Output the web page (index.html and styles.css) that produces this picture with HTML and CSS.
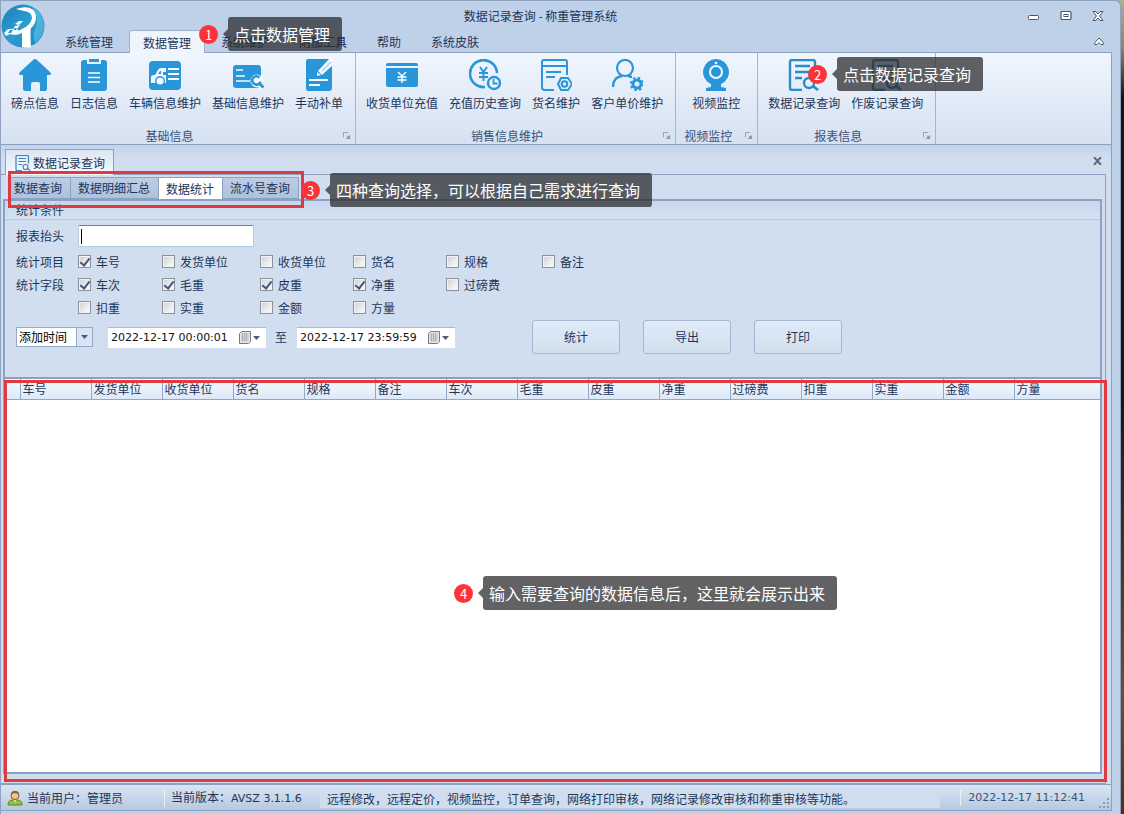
FILE: index.html
```html
<!DOCTYPE html>
<html lang="zh-CN">
<head>
<meta charset="utf-8">
<title>数据记录查询 - 称重管理系统</title>
<link rel="stylesheet" href="styles.css">
</head>
<body>
<svg class="defs" aria-hidden="true">
  <defs>
    <linearGradient id="globe" x1="0" y1="0" x2="1" y2="1"><stop offset="0" stop-color="#1d7fb8"/><stop offset=".5" stop-color="#2b9bd0"/><stop offset="1" stop-color="#1a86c0"/></linearGradient>
    <symbol id="launcher" viewBox="0 0 9 9"><path d="M.5 6V.5H6M4 4l2 2" fill="none" stroke="#8a97aa"/><path d="M8 3v5H3z" fill="#8a97aa"/></symbol>
    <symbol id="calendar" viewBox="0 0 12 13"><path d="M2.500.5h9v10l-2 2h-9v-10z" fill="#e6e8ea" stroke="#77797c"/><path d="M2 3h8M2 5h8M2 7h8M2 9h8M3.500 2v9M5.500 2v9M7.500 2v9" stroke="#a3a8ae" stroke-width=".7"/></symbol>
    <symbol id="down" viewBox="0 0 7 4"><path d="M0 0h7L3.500 4z" fill="#4b5d78"/></symbol>
    <symbol id="record" viewBox="0 0 32 32"><path d="M27 17V3a2 2 0 0 0-2-2H4a2 2 0 0 0-2 2v26a2 2 0 0 0 2 2h10M7 7h15M7 13h15M7 19h7" fill="none" stroke="currentColor" stroke-width="2.400"/><circle cx="21" cy="24" r="5" fill="none" stroke="currentColor" stroke-width="2.400"/><path d="M25 27l5 4" stroke="currentColor" stroke-width="2.800"/></symbol>
  </defs>
</svg>
<div class="window">
  <header class="header">
    <svg class="logo" viewBox="0 0 44 44"><circle cx="22" cy="22" r="21.500" fill="url(#globe)"/><path d="M31 3a21 21 0 0 1 3 36q-3-8 1-17 3-10-4-19z" fill="#6cc8ea" opacity=".55"/><path d="M15 5q8-3 14-1 7 3 6 11-1 6-5 9-1 2 0 19-4 1-9 0V29q-4 2-8 2 2-3 8-6 9-4 10-11 0-6-8-7-5-1-8-2z" fill="#fff"/><path d="M3 29l4-4h5l2-3 5-1-3 4 2 2-5 4-4-1-4 2zM14 20l4-3h4l-4 4z" fill="#fff"/><path d="M9 26h3l-2 3H7zM14 24h2l-1 2h-3z" fill="#2b95ca"/></svg>
    <div class="titlebar">
      <h1 class="title">数据记录查询 - 称重管理系统</h1>
      <div class="controls">
        <button class="control" aria-label="最小化"><svg width="12" height="12"><rect x=".5" y="5.500" width="10" height="4" rx="1" fill="#fff" stroke="#4a5468"/></svg></button>
        <button class="control" aria-label="最大化"><svg width="12" height="12"><rect x="1" y="1.500" width="10" height="8" rx="1" fill="#fff" stroke="#4a5468" stroke-width="1.200"/><rect x="4" y="4.500" width="4" height="2" fill="#fff" stroke="#4a5468"/></svg></button>
        <button class="control" aria-label="关闭"><svg width="12" height="12"><path d="M1 1.500h3l2 2.500 2-2.500h3L7.500 6l3.500 4.500H8L6 8l-2 2.500H1L4.500 6z" fill="#fff" stroke="#4a5468"/></svg></button>
      </div>
    </div>
    <nav class="menu">
      <button class="menu-tab">系统管理</button>
      <button class="menu-tab menu-tab-active">数据管理</button>
      <button class="menu-tab">系统维护</button>
      <button class="menu-tab">附加工具</button>
      <button class="menu-tab">帮助</button>
      <button class="menu-tab">系统皮肤</button>
      <button class="control collapse" aria-label="收起功能区"><svg width="10" height="9"><path d="M.8 5.500L5 1l4.200 4.500v2H7L5 5.500 3 7.500H.8z" fill="#fff" stroke="#4a5468"/></svg></button>
    </nav>
  </header>

  <section class="ribbon">
    <div class="group">
      <div class="tools">
        <button class="tool"><svg class="tool-icon" viewBox="0 0 32 32"><path d="M16 0q1 0 2 1l13 12q2 2 0 3h-3v14q0 2-2 2h-5v-7q0-2-2-2h-5q-2 0-2 2v7H6q-2 0-2-2V16H1q-2-1 0-3L14 1q1-1 2-1z" fill="#2896d8"/></svg>磅点信息</button>
        <button class="tool"><svg class="tool-icon" viewBox="0 0 32 32"><path d="M6 1h3v4h14V1h3q3 0 3 3v25q0 3-3 3H6q-3 0-3-3V4q0-3 3-3zM11 0h10v3H11z" fill="#2896d8"/><path d="M10 14h12M10 18.500h12M10 23h12" stroke="#fff" stroke-width="1.600"/></svg>日志信息</button>
        <button class="tool"><svg class="tool-icon" viewBox="0 0 32 32"><rect y="2" width="32" height="29" rx="4" fill="#2896d8"/><path d="M2 24v-6q0-2 3-2h1l3-5q1-2 3-2h5v4h-3v3h3v8z" fill="#f4faff"/><path d="M9 15l2-3h1v3z" fill="#2896d8"/><circle cx="11" cy="22" r="5" fill="#2896d8"/><circle cx="11" cy="22" r="3.600" fill="#f4faff"/><path d="M19 10h11M19 15h11M19 20h11" stroke="#f4faff" stroke-width="2"/></svg>车辆信息维护</button>
        <button class="tool"><svg class="tool-icon" viewBox="0 0 32 32"><rect x="1" y="6" width="28" height="23" rx="3" fill="#2896d8"/><path d="M4 11h7M4 17h9M4 22h14" stroke="#f4faff" stroke-width="1.600"/><circle cx="25" cy="22" r="6.500" fill="#f4faff"/><path d="M26 24l5 5" stroke="#f4faff" stroke-width="6"/><path d="M27.500 18.500a4.200 4.200 0 1 0 1 4" fill="none" stroke="#2896d8" stroke-width="2.600"/><path d="M27 24l4.500 4.500" stroke="#2896d8" stroke-width="3"/></svg>基础信息维护</button>
        <button class="tool"><svg class="tool-icon" viewBox="0 0 32 32"><path d="M5 0h21q3 0 3 3v26q0 3-3 3H5q-2 0-2-3V3q0-3 2-3z" fill="#2896d8"/><path d="M26 0h5v5L19 16l-4-4z" fill="#f4faff"/><path d="M14 13l4 3-4 1z" fill="#f4faff"/><path d="M28 3l-9 9" stroke="#b9def4" stroke-width="2"/><path d="M6 21h19M6 26h11" stroke="#f4faff" stroke-width="1.800"/></svg>手动补单</button>
      </div>
      <div class="group-foot"><span class="group-name">基础信息</span><svg class="launcher"><use href="#launcher"/></svg></div>
    </div>
    <div class="group">
      <div class="tools">
        <button class="tool"><svg class="tool-icon" viewBox="0 0 32 32"><path d="M2 4h28q2 0 2 2v1H0V6q0-2 2-2zM0 9h32v17q0 2-2 2H2q-2 0-2-2z" fill="#2896d8"/><path d="M12 13l4 4 4-4M11.500 18h9M11.500 21h9M16 17v7" fill="none" stroke="#fff" stroke-width="1.400"/></svg>收货单位充值</button>
        <button class="tool"><svg class="tool-icon" viewBox="0 0 32 32"><path d="M28 14A13.500 13.500 0 1 0 16 28" fill="none" stroke="#2896d8" stroke-width="2.600"/><path d="M11 8l3.500 5L18 8M10 14h9M10 18h9M14.500 13v9" fill="none" stroke="#2896d8" stroke-width="2"/><circle cx="25" cy="24" r="6" fill="#edf4fc" stroke="#2896d8" stroke-width="2.400"/><path d="M24.500 20v4.500h4" fill="none" stroke="#2896d8" stroke-width="1.800"/></svg>充值历史查询</button>
        <button class="tool"><svg class="tool-icon" viewBox="0 0 32 32"><path d="M27 16V3q0-2-2-2H4Q2 1 2 3v25q0 3 3 3h9M2 7h25M6 13h15M6 18h9" fill="none" stroke="#2896d8" stroke-width="2"/><path d="M21 19h7l4 6-4 6h-7l-3-6z" fill="none" stroke="#2896d8" stroke-width="2"/><circle cx="24.500" cy="25" r="2.800" fill="none" stroke="#2896d8" stroke-width="2"/></svg>货名维护</button>
        <button class="tool"><svg class="tool-icon" viewBox="0 0 32 32"><circle cx="14" cy="9" r="8" fill="none" stroke="#2896d8" stroke-width="2.200"/><path d="M2 28q0-10 9-11M17 17l4 1" fill="none" stroke="#2896d8" stroke-width="2.400"/><circle cx="26" cy="25" r="4" fill="none" stroke="#2896d8" stroke-width="3"/><circle cx="26" cy="25" r="6" fill="none" stroke="#2896d8" stroke-width="2.400" stroke-dasharray="2.360 2.360"/></svg>客户单价维护</button>
      </div>
      <div class="group-foot"><span class="group-name">销售信息维护</span><svg class="launcher"><use href="#launcher"/></svg></div>
    </div>
    <div class="group">
      <div class="tools tools-single">
        <button class="tool"><svg class="tool-icon" viewBox="0 0 32 32"><path d="M16 0a13 13 0 0 1 5 25v3l5 1v3H6v-3l5-1v-3A13 13 0 0 1 16 0z" fill="#2896d8"/><circle cx="16" cy="13" r="6" fill="none" stroke="#f4faff" stroke-width="2"/><circle cx="16" cy="4" r="1.300" fill="#f4faff"/></svg>视频监控</button>
      </div>
      <div class="group-foot"><span class="group-name">视频监控</span><svg class="launcher"><use href="#launcher"/></svg></div>
    </div>
    <div class="group">
      <div class="tools">
        <button class="tool"><svg class="tool-icon"><use href="#record"/></svg>数据记录查询</button>
        <button class="tool"><svg class="tool-icon"><use href="#record"/></svg>作废记录查询</button>
      </div>
      <div class="group-foot"><span class="group-name">报表信息</span><svg class="launcher"><use href="#launcher"/></svg></div>
    </div>
  </section>

  <main class="workspace">
    <div class="doc-tabs">
      <button class="doc-tab"><svg class="doc-icon"><use href="#record"/></svg>数据记录查询</button>
      <button class="control doc-close" aria-label="关闭标签"><svg width="9" height="8"><path d="M1 0l7 8M8 0L1 8" stroke="#5d6a7e" stroke-width="2"/></svg></button>
    </div>
    <div class="document">
      <nav class="views">
        <button class="view">数据查询</button>
        <button class="view">数据明细汇总</button>
        <button class="view view-active">数据统计</button>
        <button class="view">流水号查询</button>
      </nav>
      <div class="page">
        <form class="filters">
          <h2 class="filters-title">统计条件</h2>
          <div class="fields">
            <label for="report-title">报表抬头</label>
            <input class="text-box" id="report-title" type="text">
            <span class="row-start">统计项目</span>
            <label class="check"><input type="checkbox" checked>车号</label>
            <label class="check"><input type="checkbox">发货单位</label>
            <label class="check"><input type="checkbox">收货单位</label>
            <label class="check"><input type="checkbox">货名</label>
            <label class="check"><input type="checkbox">规格</label>
            <label class="check"><input type="checkbox">备注</label>
            <span class="row-start">统计字段</span>
            <label class="check"><input type="checkbox" checked>车次</label>
            <label class="check"><input type="checkbox" checked>毛重</label>
            <label class="check"><input type="checkbox" checked>皮重</label>
            <label class="check"><input type="checkbox" checked>净重</label>
            <label class="check"><input type="checkbox">过磅费</label>
            <label class="check check-first"><input type="checkbox">扣重</label>
            <label class="check"><input type="checkbox">实重</label>
            <label class="check"><input type="checkbox">金额</label>
            <label class="check"><input type="checkbox">方量</label>
          </div>
          <div class="range">
            <span class="combo"><select class="combo-select" aria-label="时间类型"><option>添加时间</option></select><span class="combo-arrow"><svg width="7" height="4"><use href="#down"/></svg></span></span>
            <span class="date"><input class="date-input" type="text" value="2022-12-17 00:00:01" aria-label="开始时间"><button type="button" class="date-button" aria-label="选择开始时间"><svg width="12" height="13"><use href="#calendar"/></svg><svg width="7" height="4"><use href="#down"/></svg></button></span>
            <span class="to">至</span>
            <span class="date"><input class="date-input" type="text" value="2022-12-17 23:59:59" aria-label="结束时间"><button type="button" class="date-button" aria-label="选择结束时间"><svg width="12" height="13"><use href="#calendar"/></svg><svg width="7" height="4"><use href="#down"/></svg></button></span>
            <span class="actions">
              <button type="button" class="action">统计</button>
              <button type="button" class="action">导出</button>
              <button type="button" class="action">打印</button>
            </span>
          </div>
        </form>
        <div class="results">
          <table class="grid">
            <thead><tr><th class="marker"></th><th>车号</th><th>发货单位</th><th>收货单位</th><th>货名</th><th>规格</th><th>备注</th><th>车次</th><th>毛重</th><th>皮重</th><th>净重</th><th>过磅费</th><th>扣重</th><th>实重</th><th>金额</th><th class="rest">方量</th></tr></thead>
          </table>
        </div>
      </div>
    </div>
    <div class="outline outline-results"></div>
    <div class="outline outline-views"></div>
  </main>

  <footer class="status">
    <svg class="user" viewBox="0 0 16 16"><path d="M1 15q0-5 5-5h4q5 0 5 5z" fill="#8fc43a" stroke="#5f8428"/><path d="M6 9h4l-2 4z" fill="#f4d9a8"/><circle cx="8" cy="5.500" r="4" fill="#f1c686" stroke="#84592d"/><path d="M4 5q0-4 4-4t4 4q-2-2-4-2T4 5z" fill="#8b5a2b"/></svg>
    <span class="status-user">当前用户：管理员</span>
    <span class="status-version">当前版本：<span class="latin">AVSZ 3.1.1.6</span></span>
    <span class="status-news">远程修改，远程定价，视频监控，订单查询，网络打印审核，网络记录修改审核和称重审核等功能。</span>
    <time class="status-time latin">2022-12-17 11:12:41</time>
    <svg class="grip" width="10" height="10"><path d="M8 0h2v2H8zM4 4h2v2H4zM8 4h2v2H8zM0 8h2v2H0zM4 8h2v2H4zM8 8h2v2H8z" fill="#8b9db8"/></svg>
  </footer>

  <div class="callout callout-menu"><span class="badge">1</span><span class="tip">点击数据管理</span></div>
  <div class="callout callout-record"><span class="badge">2</span><span class="tip">点击数据记录查询</span></div>
  <div class="callout callout-views"><span class="badge">3</span><span class="tip">四种查询选择，可以根据自己需求进行查询</span></div>
  <div class="callout callout-results"><span class="badge">4</span><span class="tip">输入需要查询的数据信息后，这里就会展示出来</span></div>
</div>
</body>
</html>
```

FILE: styles.css
```css
* { box-sizing: border-box; }

body {
  margin: 0;
  padding-right: 3px;
  background: linear-gradient(#b4ab90, #8a8468 6%, #17130f 12%, #1d1712 50%, #6b4f30 85%, #4d3115);
  color: #1e3558;
  font: 12px/16px "Noto Sans CJK SC", sans-serif;
}

button, input, select {
  margin: 0;
  padding: 0;
  border: 0;
  background: none;
  color: inherit;
  font: inherit;
}

svg { display: block; flex: none; }

.defs { position: absolute; width: 0; height: 0; }

.window {
  position: relative;
  display: flex;
  flex-direction: column;
  min-height: 100vh;
  padding: 0 8px 3px 0;
  border: 1px solid #8fa3c0;
  border-width: 1px 1px 0;
  border-radius: 0 6px 0 0;
  background: #bfd1e9;
}

.latin { font-family: "DejaVu Sans", sans-serif; font-size: 11px; }

/* Title bar and menu */
.header { position: relative; }
.logo { position: absolute; left: 0; top: 3px; width: 44px; height: 44px; }

.titlebar {
  display: grid;
  grid-template-columns: 1fr auto 1fr;
  align-items: center;
  height: 29px;
  padding-right: 8px;
}
.title {
  grid-column: 2;
  margin: 0;
  padding-right: 24px;
  font-size: 12px;
  font-weight: 400;
}
.controls { display: flex; gap: 20px; justify-content: flex-end; }
.control { display: grid; place-items: center; }

.menu { display: flex; gap: 2px; height: 22px; padding: 0 8px 0 50px; }
.menu-tab { padding: 2px 14px 0; }
.menu-tab-active {
  margin-bottom: -1px;
  padding: 1px 13px 0;
  border: 1px solid #9db2d0;
  border-bottom: 0;
  border-radius: 3px 3px 0 0;
  background: #eff5fd;
  z-index: 1;
}
.collapse { margin-left: auto; }

/* Ribbon */
.ribbon {
  display: flex;
  height: 93px;
  border: 1px solid #8ba1c1;
  border-left: 0;
  background: linear-gradient(#f0f6fe, #e2ebf7 50%, #d6e2f1);
}
.group {
  display: flex;
  flex-direction: column;
  justify-content: space-between;
  border-right: 1px solid #a3b6d0;
}
.tools { display: flex; gap: 11px; padding: 6px 12px 0 10px; }
.tools-single { padding: 6px 17px 0 16px; }
.tool { display: flex; flex-direction: column; align-items: center; gap: 4px; }
.tool-icon { width: 32px; height: 32px; color: #2a8cc8; }
.group-foot { display: flex; align-items: center; padding: 0 4px 0 0; color: #38517a; }
.group-name { flex: 1; padding-right: 5px; text-align: center; }
.launcher { width: 8px; height: 8px; }

/* Workspace */
.workspace {
  position: relative;
  display: flex;
  flex: 1;
  flex-direction: column;
  border-right: 1px solid #8ba1c1;
  background: linear-gradient(#c3d2e8, #d0deef 12px);
}
.doc-tabs { display: flex; height: 29px; padding: 4px 9px 0 4px; }
.doc-tab {
  display: flex;
  align-items: center;
  gap: 2px;
  margin-bottom: -1px;
  padding: 0 8px 0 9px;
  border: 1px solid #8ba1c1;
  border-bottom: 0;
  background: linear-gradient(#dbe6f4, #f7faff);
  z-index: 1;
}
.doc-icon { width: 16px; height: 16px; color: #3c84b4; }
.doc-close { margin-left: auto; padding-bottom: 2px; }

.document {
  display: flex;
  flex: 1;
  flex-direction: column;
  margin-right: 5px;
  padding: 2px 3px 9px 2px;
  border: 1px solid #8ba1c1;
  border-left: 0;
  background: #d0deef;
}
.views { display: flex; height: 22px; padding-left: 6px; }
.view { padding: 0 8px 0 7px; border: 1px solid #8ba1c1; border-left: 0; background: linear-gradient(#bccde4, #adc2dd); }
.view:first-child { padding-left: 4px; border-left: 1px solid #8ba1c1; }
.view-active { background: #fff; border-bottom: 0; }

.page {
  display: flex;
  flex: 1;
  flex-direction: column;
  border: 2px solid #8ba1bf;
  background: #d0deef;
}

/* Filters */
.filters { padding-bottom: 23px; border-bottom: 2px solid #8ba1bf; }
.filters-title {
  height: 19px;
  margin: 0;
  padding: 1px 0 0 11px;
  border-bottom: 1px solid #b3c9e2;
  background: linear-gradient(#c5d7ec, #d5e3f3);
  font-size: 12px;
  font-weight: 400;
}
.fields {
  display: grid;
  grid-template-columns: 62px 84px 98px 93px 93px 96px auto;
  grid-template-rows: 28px;
  grid-auto-rows: 23px;
  align-items: center;
  padding: 2px 11px 0;
}
.text-box {
  grid-column: 2 / 4;
  width: 176px;
  height: 22px;
  padding: 0 5px;
  border: 1px solid #b4c8e0;
  border-top-color: #6784a5;
  border-radius: 2px;
  outline: 0;
  background: linear-gradient(#000, #000) 2px center / 1px 15px no-repeat #fff;
  color: #000;
}
.row-start { grid-column: 1; }
.check { display: flex; align-items: center; gap: 5px; }
.check-first { grid-column: 2; }
.check input {
  appearance: none;
  display: grid;
  place-items: center;
  width: 13px;
  height: 13px;
  border: 1px solid #8b929b;
  background: linear-gradient(135deg, #cdd0d4, #fff);
  box-shadow: inset 0 0 0 1px #f2f2f2;
}
.check input:checked::before {
  content: "";
  width: 4px;
  height: 8px;
  margin-bottom: 2px;
  border: solid #46557a;
  border-width: 0 2px 2px 0;
  transform: rotate(38deg);
}

.range { display: flex; align-items: center; padding: 1px 11px 0; }
.combo { position: relative; width: 77px; height: 20px; }
.combo-select {
  appearance: none;
  width: 100%;
  height: 100%;
  padding-left: 2px;
  border: 1px solid #96aac4;
  background: #fff;
  color: #000;
}
.combo-arrow {
  position: absolute;
  inset: 1px 1px 1px auto;
  display: grid;
  place-items: center;
  width: 16px;
  border-left: 1px solid #96aac4;
  background: #d9e5f4;
  pointer-events: none;
}
.date { display: flex; width: 158px; height: 21px; margin-left: 15px; padding: 0 6px 0 3px; background: #fff; border-top: 1px solid #a9bcd6; }
.date-input { flex: 1; min-width: 0; color: #111; font: 11px/16px "DejaVu Sans", sans-serif; outline: 0; }
.date-button { display: flex; align-items: center; gap: 2px; }
.to { width: 16px; margin-left: 9px; }
.to + .date { margin-left: 6px; }
.actions { display: flex; gap: 23px; margin-left: 77px; }
.action {
  width: 88px;
  height: 34px;
  border: 1px solid #a5b7d0;
  border-radius: 3px;
  background: linear-gradient(#dfeafa, #d2dfec);
}

/* Results */
.results { flex: 1; background: #fff; }
.grid { width: 100%; border-collapse: collapse; table-layout: fixed; }
.grid th {
  width: 71px;
  height: 20px;
  padding: 0 2px;
  border: 1px solid #92a8c8;
  border-top: 0;
  background: linear-gradient(#f5f9fe, #dce8f8);
  font-weight: 400;
  text-align: left;
}
.grid .marker { width: 15px; border-left: 0; }
.grid .rest { width: auto; border-right: 0; }

/* Status bar */
.status {
  display: flex;
  align-items: center;
  height: 27px;
  border: 1px solid #8ba1c1;
  border-left: 0;
  background: linear-gradient(#d9e5f4, #b7c9e0);
}
.user { width: 16px; height: 16px; margin: 0 4px 0 6px; }
.status-user { width: 137px; }
.status-version { width: 156px; padding-left: 6px; border-left: 1px solid #e8f0fa; }
.status-news { flex: 1; max-width: 620px; padding: 3px 0 1px 7px; background: #cfddef; }
.status-time { margin-left: auto; padding: 0 14px 0 7px; border-left: 1px solid #e8f0fa; color: #38517a; }
.grip { align-self: flex-end; margin: 0 2px 2px 0; }

/* Annotations drawn over the window */
.outline { position: absolute; border: 3px solid #e0393f; pointer-events: none; z-index: 2; }
.outline-views { left: 7px; top: 26px; width: 296px; height: 37px; }
.outline-results { inset: 235px 4px 2px 3px; }

.callout { position: absolute; display: flex; align-items: center; gap: 10px; z-index: 3; }
.callout-menu { left: 198px; top: 16px; }
.callout-record { left: 807px; top: 56px; }
.callout-views { left: 300px; top: 172px; }
.callout-results { left: 453px; top: 575px; }
.badge {
  width: 19px;
  height: 19px;
  border-radius: 50%;
  background: #fb343a;
  color: #fff;
  font-size: 13px;
  line-height: 19px;
  text-align: center;
}
.tip {
  position: relative;
  padding: 5px 12px 5px 6px;
  border-radius: 3px;
  background: rgba(40, 40, 42, .73);
  color: #fff;
  font-size: 16px;
  line-height: 24px;
}
.tip::before {
  content: "";
  position: absolute;
  left: -5px;
  top: 12px;
  border: solid transparent;
  border-width: 5px 5px 5px 0;
  border-right-color: rgba(40, 40, 42, .73);
}
```
